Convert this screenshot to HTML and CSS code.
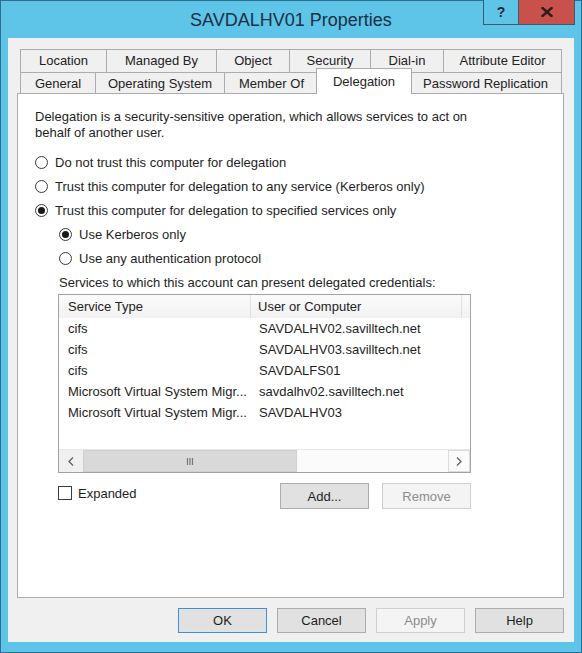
FILE: index.html
```html
<!DOCTYPE html>
<html lang="en">
<head>
<meta charset="utf-8">
<title>SAVDALHV01 Properties</title>
<link rel="stylesheet" href="styles.css">
</head>
<body>
<div class="window">
  <div class="titlebar">
    <div class="title">SAVDALHV01 Properties</div>
    <div class="caption-buttons">
      <div class="cap-btn cap-help">?</div>
      <div class="cap-btn cap-close">
        <svg width="12" height="10" viewBox="0 0 12 10"><path d="M1.5 1 L10.5 9 M10.5 1 L1.5 9" stroke="#2b1b1b" stroke-width="2.4" stroke-linecap="square"/></svg>
      </div>
    </div>
  </div>

  <div class="client">
    <div class="tabs">
      <div class="tab-row tab-row-back">
        <div class="tab">Location</div>
        <div class="tab">Managed By</div>
        <div class="tab">Object</div>
        <div class="tab">Security</div>
        <div class="tab">Dial-in</div>
        <div class="tab">Attribute Editor</div>
      </div>
      <div class="tab-row tab-row-front">
        <div class="tab">General</div>
        <div class="tab">Operating System</div>
        <div class="tab">Member Of</div>
        <div class="tab tab-selected">Delegation</div>
        <div class="tab">Password Replication</div>
      </div>
    </div>

    <div class="page">
      <p class="intro">Delegation is a security-sensitive operation, which allows services to act on behalf of another user.</p>

      <div class="options">
        <label class="radio"><span class="radio-dot"></span>Do not trust this computer for delegation</label>
        <label class="radio"><span class="radio-dot"></span>Trust this computer for delegation to any service (Kerberos only)</label>
        <label class="radio"><span class="radio-dot checked"></span>Trust this computer for delegation to specified services only</label>
        <div class="sub-options">
          <label class="radio"><span class="radio-dot checked"></span>Use Kerberos only</label>
          <label class="radio"><span class="radio-dot"></span>Use any authentication protocol</label>
        </div>
      </div>

      <div class="services">
        <div class="services-label">Services to which this account can present delegated credentials:</div>
        <div class="listview">
          <div class="lv-header">
            <div class="lv-col lv-col-type">Service Type</div>
            <div class="lv-col lv-col-user">User or Computer</div>
            <div class="lv-col lv-col-rest"></div>
          </div>
          <div class="lv-body">
            <div class="lv-row"><span class="lv-cell lv-col-type">cifs</span><span class="lv-cell">SAVDALHV02.savilltech.net</span></div>
            <div class="lv-row"><span class="lv-cell lv-col-type">cifs</span><span class="lv-cell">SAVDALHV03.savilltech.net</span></div>
            <div class="lv-row"><span class="lv-cell lv-col-type">cifs</span><span class="lv-cell">SAVDALFS01</span></div>
            <div class="lv-row"><span class="lv-cell lv-col-type">Microsoft Virtual System Migr...</span><span class="lv-cell">savdalhv02.savilltech.net</span></div>
            <div class="lv-row"><span class="lv-cell lv-col-type">Microsoft Virtual System Migr...</span><span class="lv-cell">SAVDALHV03</span></div>
          </div>
          <div class="hscroll">
            <div class="sb-arrow sb-left">
              <svg width="6" height="9" viewBox="0 0 6 9"><path d="M5 0.5 L1 4.5 L5 8.5" fill="none" stroke="#606060" stroke-width="1.3"/></svg>
            </div>
            <div class="sb-thumb">
              <svg width="8" height="7" viewBox="0 0 8 7"><path d="M1.5 0 V7 M4 0 V7 M6.5 0 V7" stroke="#777" stroke-width="1.2"/></svg>
            </div>
            <div class="sb-track"></div>
            <div class="sb-arrow sb-right">
              <svg width="6" height="9" viewBox="0 0 6 9"><path d="M1 0.5 L5 4.5 L1 8.5" fill="none" stroke="#606060" stroke-width="1.3"/></svg>
            </div>
          </div>
        </div>
        <div class="list-actions">
          <label class="checkbox"><span class="check-box"></span>Expanded</label>
          <div class="action-buttons">
            <div class="button">Add...</div>
            <div class="button disabled">Remove</div>
          </div>
        </div>
      </div>
    </div>

    <div class="dialog-buttons">
      <div class="button default">OK</div>
      <div class="button">Cancel</div>
      <div class="button disabled">Apply</div>
      <div class="button">Help</div>
    </div>
  </div>
</div>
</body>
</html>
```

FILE: styles.css
```css
* {
  box-sizing: border-box;
}

html, body {
  margin: 0;
  padding: 0;
  background: #ffffff;
}

body {
  font-family: "Liberation Sans", Arial, sans-serif;
  font-size: 13px;
  color: #1e1e1e;
}

/* Window frame */
.window {
  width: 582px;
  height: 653px;
  background: #5ec4e8;
  border: 1px solid #2f6f8f;
  padding: 0 7px 10px 7px;
  display: flex;
  flex-direction: column;
}

.titlebar {
  height: 37px;
  flex: none;
  display: grid;
  grid-template-columns: 1fr auto 1fr;
  align-items: center;
}

.title {
  grid-column: 2;
  font-size: 18px;
  color: #1a3044;
  padding-top: 2px;
}

.caption-buttons {
  grid-column: 3;
  justify-self: end;
  align-self: start;
  display: flex;
  margin-right: -1px;
  margin-top: -1px;
}

.cap-btn {
  height: 25px;
  display: flex;
  align-items: center;
  justify-content: center;
  border: 1px solid #3a5d74;
  border-top: none;
}

.cap-help {
  width: 35px;
  background: #5ec4e8;
  border-right: none;
  font-weight: bold;
  font-size: 14px;
  color: #1d2a38;
}

.cap-close {
  width: 57px;
  background: #c9514b;
}

/* Client area */
.client {
  flex: 1;
  background: #f0f0f0;
  padding: 11px 10px 9px 9px;
  display: flex;
  flex-direction: column;
}

.tabs {
  padding-left: 3px;
  flex: none;
}

.tab-row {
  display: flex;
}

.tab {
  display: flex;
  align-items: center;
  justify-content: center;
  background: #f0f0f0;
  border: 1px solid #acacac;
  border-bottom: none;
  margin-right: -1px;
  white-space: nowrap;
  color: #222;
}

.tab-row-back .tab {
  height: 23px;
  padding-bottom: 1px;
}

.tab-row-front .tab {
  height: 21px;
  padding-top: 1px;
}

.tab-row-back .tab:nth-child(1) { width: 87px; }
.tab-row-back .tab:nth-child(2) { width: 111px; }
.tab-row-back .tab:nth-child(3) { width: 74px; }
.tab-row-back .tab:nth-child(4) { width: 82px; }
.tab-row-back .tab:nth-child(5) { width: 74px; }
.tab-row-back .tab:nth-child(6) { width: 119px; }

.tab-row-front .tab:nth-child(1) { width: 76px; }
.tab-row-front .tab:nth-child(2) { width: 130px; }
.tab-row-front .tab:nth-child(3) { width: 95px; }
.tab-row-front .tab:nth-child(5) { width: 153px; }

.tab-row-front .tab.tab-selected {
  width: 96px;
  height: 26px;
  margin: -4px -3px -1px -2px;
  padding-top: 0;
  padding-bottom: 1px;
  background: #ffffff;
  position: relative;
  z-index: 2;
}

/* Tab page */
.page {
  height: 505px;
  flex: none;
  background: #ffffff;
  border: 1px solid #acacac;
  padding: 15px 16px 0 17px;
  position: relative;
  z-index: 1;
}

.intro {
  margin: 0;
  line-height: 16px;
  width: 440px;
}

.options {
  margin-top: 9px;
}

.radio {
  display: flex;
  align-items: center;
  height: 24px;
}

.radio-dot {
  width: 13px;
  height: 13px;
  border: 1px solid #3c3c3c;
  border-radius: 50%;
  background: #fff;
  margin-right: 7px;
  display: flex;
  align-items: center;
  justify-content: center;
  flex: none;
}

.radio-dot.checked::after {
  content: "";
  width: 7px;
  height: 7px;
  border-radius: 50%;
  background: #1a1a1a;
}

.sub-options {
  padding-left: 24px;
}

.services {
  padding-left: 23px;
  margin-top: 5px;
}

.services-label {
  line-height: 16px;
  padding-left: 1px;
}

/* List view */
.listview {
  margin-top: 3px;
  width: 413px;
  height: 179px;
  border: 1px solid #a2a2a2;
  background: #fff;
  display: flex;
  flex-direction: column;
}

.lv-header {
  height: 23px;
  flex: none;
  display: flex;
  background: linear-gradient(#fbfbfb, #f2f2f2);
}

.lv-col {
  display: flex;
  align-items: center;
  border-right: 1px solid #e2e2e2;
  color: #222;
}

.lv-col-type {
  width: 192px;
  padding-left: 9px;
  flex: none;
}

.lv-col-user {
  width: 211px;
  padding-left: 7px;
}

.lv-col-rest {
  flex: 1;
  border-right: none;
}

.lv-body {
  flex: 1;
}

.lv-row {
  display: flex;
  align-items: center;
  height: 21px;
  white-space: nowrap;
}

.lv-row .lv-cell {
  padding-left: 8px;
}

.lv-row .lv-col-type {
  padding-left: 9px;
}

/* Horizontal scroll bar */
.hscroll {
  height: 23px;
  flex: none;
  display: flex;
  background: #f0f0f0;
  border-top: 1px solid #e8e8e8;
}

.sb-arrow {
  display: flex;
  align-items: center;
  justify-content: center;
  flex: none;
}

.sb-left {
  width: 24px;
}

.sb-right {
  width: 22px;
  background: #fbfbfb;
  border: 1px solid #dcdcdc;
}

.sb-thumb {
  width: 214px;
  flex: none;
  background: #d9d9d9;
  border: 1px solid #cfcfcf;
  display: flex;
  align-items: center;
  justify-content: center;
}

.sb-track {
  flex: 1;
  background: #fbfbfb;
}

/* Check box and buttons under the list */
.list-actions {
  width: 413px;
  margin-top: 10px;
  display: flex;
  align-items: flex-start;
  justify-content: space-between;
}

.checkbox {
  display: flex;
  align-items: center;
  height: 16px;
  margin-top: 2px;
}

.check-box {
  width: 14px;
  height: 14px;
  border: 1px solid #3c3c3c;
  background: #fff;
  margin-right: 6px;
}

.action-buttons {
  display: flex;
  gap: 13px;
}

.button {
  width: 89px;
  height: 26px;
  display: flex;
  align-items: center;
  justify-content: center;
  background: #e1e1e1;
  border: 1px solid #adadad;
  color: #1e1e1e;
}

.button.default {
  border-color: #4a8cc4;
  box-shadow: inset 0 0 0 1px #d6e6f4;
}

.button.disabled {
  background: #f4f4f4;
  border-color: #cfcfcf;
  color: #8c8c8c;
}

/* Dialog buttons */
.dialog-buttons {
  margin-top: auto;
  display: flex;
  justify-content: flex-end;
  gap: 10px;
}

.dialog-buttons .button {
  height: 25px;
}
```
